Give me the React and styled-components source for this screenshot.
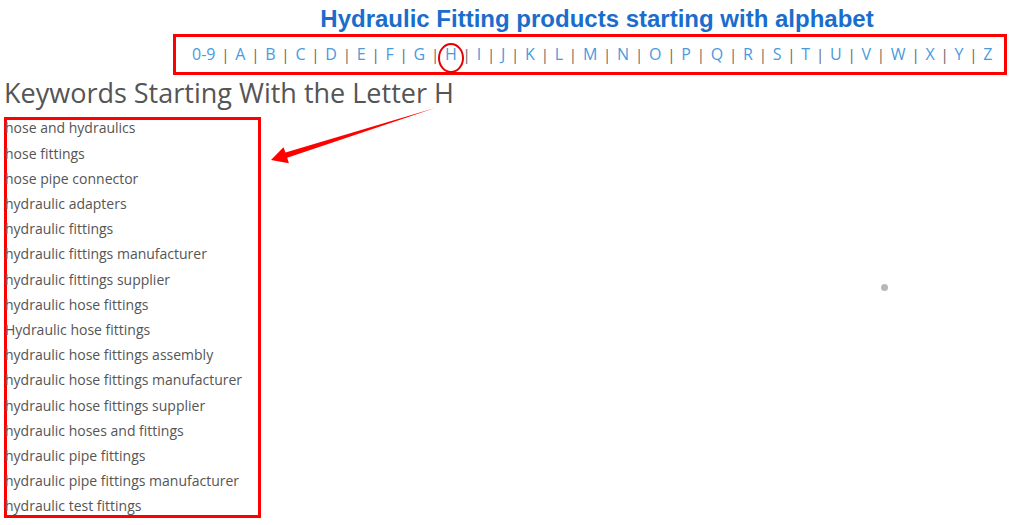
import React from 'react';
import styled, { createGlobalStyle } from 'styled-components';

const letters = ['0-9', ...'ABCDEFGHIJKLMNOPQRSTUVWXYZ'.split('')];

const keywords = [
  'hose and hydraulics',
  'hose fittings',
  'hose pipe connector',
  'hydraulic adapters',
  'hydraulic fittings',
  'hydraulic fittings manufacturer',
  'hydraulic fittings supplier',
  'hydraulic hose fittings',
  'Hydraulic hose fittings',
  'hydraulic hose fittings assembly',
  'hydraulic hose fittings manufacturer',
  'hydraulic hose fittings supplier',
  'hydraulic hoses and fittings',
  'hydraulic pipe fittings',
  'hydraulic pipe fittings manufacturer',
  'hydraulic test fittings',
];

const App = () => {
  return (
    <>
      <GlobalStyle />
      <Page>
        <Header>
          <Title>Hydraulic Fitting products starting with alphabet</Title>
          <LetterBar>
            {letters.map((l, i) => (
              <React.Fragment key={l}>
                {i > 0 && <Sep> | </Sep>}
                <LetterLink href="#" $active={l === 'H'}>{l}</LetterLink>
              </React.Fragment>
            ))}
          </LetterBar>
        </Header>

        <Heading>Keywords Starting With the Letter H</Heading>

        <KeywordSection>
          <KeywordList>
            {keywords.map((k, i) => (
              <KeywordItem key={i}>{k}</KeywordItem>
            ))}
          </KeywordList>
          <HighlightBox />
        </KeywordSection>

        <Arrow viewBox="0 0 1021 525" aria-hidden="true">
          <polygon points="271,160 283.5,147.2 285.5,152.6 435,108 287.2,157.8 288.9,163.2" fill="#ff0000" />
        </Arrow>
        <LoadingDot />
      </Page>
    </>
  );
};

export default App;

const GlobalStyle = createGlobalStyle`
  body {
    margin: 0;
    background: #fff;
    font-family: "Open Sans", "Liberation Sans", sans-serif;
  }
`;

const Page = styled.div`
  position: relative;
  width: 1021px;
  height: 525px;
  padding-left: 4px;
  box-sizing: border-box;
  overflow: hidden;
`;

const Header = styled.div`
  display: flex;
  flex-direction: column;
  padding: 5px 0 0 169px;
`;

const Title = styled.h2`
  margin: 0 0 2px;
  font-family: "Liberation Sans", Arial, sans-serif;
  font-size: 24px;
  font-weight: bold;
  color: #1a6dcc;
  text-align: center;
  line-height: 27px;
`;

const LetterBar = styled.div`
  width: 834px;
  height: 41px;
  box-sizing: border-box;
  border: 3px solid #ff0000;
  padding-left: 16px;
  font-size: 16px;
  line-height: 35px;
  white-space: nowrap;
`;

const Sep = styled.span`
  color: #666;
  white-space: pre;
  padding: 0 1.9px;
  font-size: 15px;
`;

const LetterLink = styled.a`
  position: relative;
  color: #4a9ade;
  text-decoration: none;

  ${({ $active }) => $active && `
    &::after {
      content: '';
      position: absolute;
      top: 0;
      left: 50%;
      width: 26px;
      height: 30px;
      margin-left: -13px;
      box-sizing: border-box;
      border: 2.5px solid #e60000;
      border-radius: 50%;
    }
  `}
`;

const Heading = styled.h1`
  margin: 2px 0 6px;
  font-size: 27px;
  font-weight: 400;
  line-height: 1.2;
  color: #555;
`;

const KeywordSection = styled.div`
  position: relative;
`;

const KeywordList = styled.ul`
  position: relative;
  z-index: 1;
  margin: 0;
  padding: 0 0 0 1px;
  list-style: none;
`;

const KeywordItem = styled.li`
  font-size: 14px;
  line-height: 25.2px;
  color: #555;
`;

const HighlightBox = styled.div`
  position: absolute;
  top: 2px;
  left: 0;
  width: 257px;
  height: 401px;
  box-sizing: border-box;
  border: 3px solid #ff0000;
  pointer-events: none;
`;

const Arrow = styled.svg`
  position: absolute;
  top: 0;
  left: 0;
  width: 1021px;
  height: 525px;
  pointer-events: none;
`;

const LoadingDot = styled.div`
  position: absolute;
  left: 881px;
  top: 284px;
  width: 7px;
  height: 7px;
  border-radius: 50%;
  background: #b8b8b8;
`;
